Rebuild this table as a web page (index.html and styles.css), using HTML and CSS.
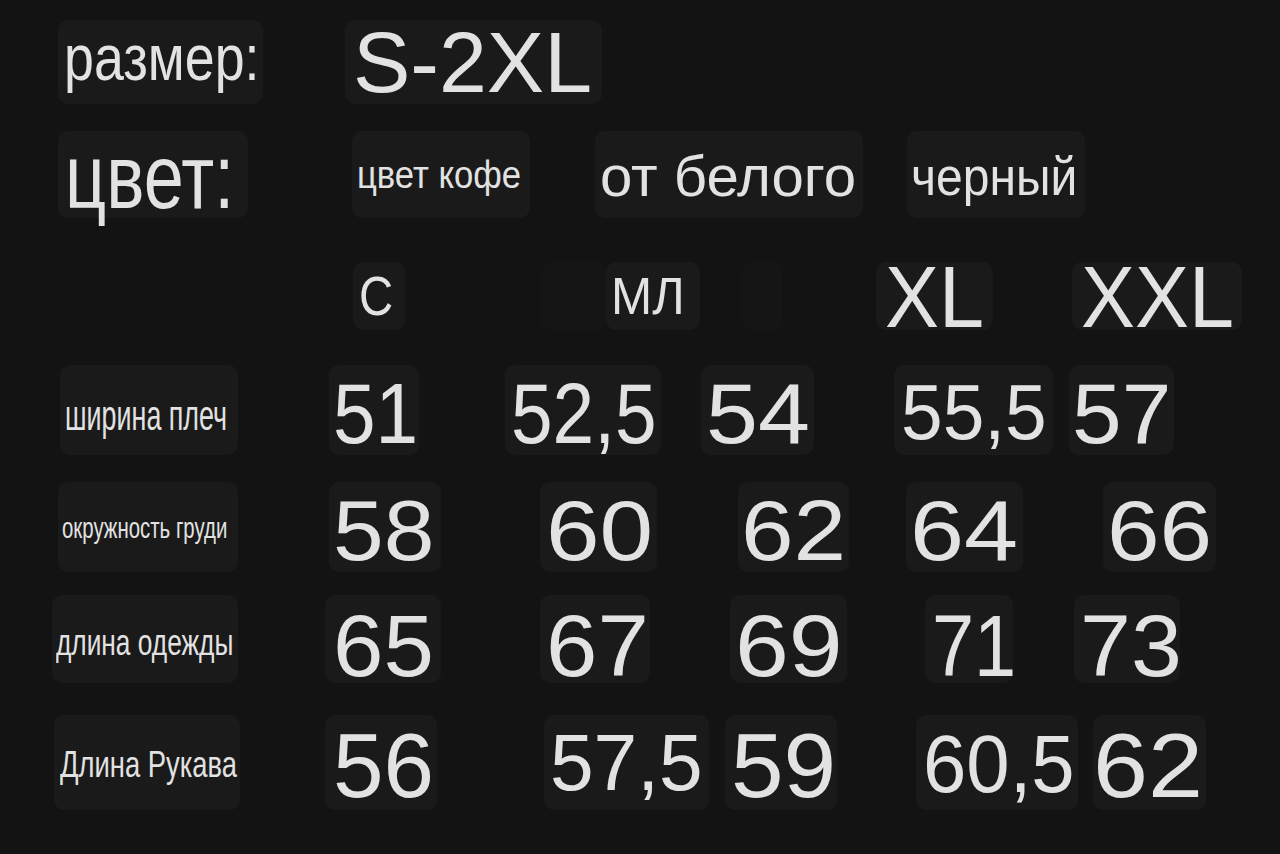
FILE: index.html
```html
<!DOCTYPE html>
<html lang="ru">
<head>
<meta charset="utf-8">
<title>Размерная сетка</title>
<link rel="stylesheet" href="styles.css">
</head>
<body>
<main class="sheet">
  <div class="row r1">
    <div class="chip c-razmer"><span class="t">размер:</span></div>
    <div class="chip c-range"><span class="t">S-2XL</span></div>
  </div>
  <div class="row r2">
    <div class="chip c-cvet"><span class="t">цвет:</span></div>
    <div class="chip c-kofe"><span class="t">цвет кофе</span></div>
    <div class="chip c-belogo"><span class="t">от белого</span></div>
    <div class="chip c-cherny"><span class="t">черный</span></div>
  </div>
  <div class="row r3">
    <div class="chip c-s"><span class="t">С</span></div>
    <div class="chip faint c-f1"></div>
    <div class="chip c-ml"><span class="t">МЛ</span></div>
    <div class="chip faint c-f2"></div>
    <div class="chip c-xl"><span class="t">XL</span></div>
    <div class="chip c-xxl"><span class="t">XXL</span></div>
  </div>
  <div class="row r4">
    <div class="chip lbl c-l4"><span class="t">ширина плеч</span></div>
    <div class="chip n c-51"><span class="t">51</span></div>
    <div class="chip n c-525"><span class="t">52,5</span></div>
    <div class="chip n c-54"><span class="t">54</span></div>
    <div class="chip n c-555"><span class="t">55,5</span></div>
    <div class="chip n c-57"><span class="t">57</span></div>
  </div>
  <div class="row r5">
    <div class="chip lbl c-l5"><span class="t">окружность груди</span></div>
    <div class="chip n c-58"><span class="t">58</span></div>
    <div class="chip n c-60"><span class="t">60</span></div>
    <div class="chip n c-62"><span class="t">62</span></div>
    <div class="chip n c-64"><span class="t">64</span></div>
    <div class="chip n c-66"><span class="t">66</span></div>
  </div>
  <div class="row r6">
    <div class="chip lbl c-l6"><span class="t">длина одежды</span></div>
    <div class="chip n c-65"><span class="t">65</span></div>
    <div class="chip n c-67"><span class="t">67</span></div>
    <div class="chip n c-69"><span class="t">69</span></div>
    <div class="chip n c-71"><span class="t">71</span></div>
    <div class="chip n c-73"><span class="t">73</span></div>
  </div>
  <div class="row r7">
    <div class="chip lbl c-l7"><span class="t">Длина Рукава</span></div>
    <div class="chip n c-56"><span class="t">56</span></div>
    <div class="chip n c-575"><span class="t">57,5</span></div>
    <div class="chip n c-59"><span class="t">59</span></div>
    <div class="chip n c-605"><span class="t">60,5</span></div>
    <div class="chip n c-62b"><span class="t">62</span></div>
  </div>
</main>
</body>
</html>
```

FILE: styles.css
```css
html, body {
  margin: 0;
  padding: 0;
  background: #131313;
}

.sheet {
  width: 1280px;
  height: 854px;
  overflow: hidden;
  padding-top: 20px;
  box-sizing: border-box;
  font-family: "Liberation Sans", Arial, sans-serif;
  color: #e2e2e2;
}

.row {
  display: flex;
  align-items: flex-start;
}

.r1 { height: 84px; }
.r2 { height: 87px; margin-top: 27px; }
.r3 { height: 68px; margin-top: 44px; }
.r4 { height: 90px; margin-top: 35px; }
.r5 { height: 90px; margin-top: 27px; }
.r6 { height: 88px; margin-top: 23px; }
.r7 { height: 95px; margin-top: 32px; }

.chip {
  --s: 1;
  flex: none;
  height: 100%;
  box-sizing: border-box;
  display: flex;
  align-items: center;
  background: #1a1a1a;
  border-radius: 10px;
  white-space: nowrap;
  overflow: visible;
}

.chip.faint {
  background: #151515;
}

.t {
  display: inline-block;
  line-height: 1;
  transform: scaleX(var(--s));
  transform-origin: 0 50%;
}

/* row 1 */
.c-razmer { margin-left: 58px; width: 205px; padding-left: 6px; padding-bottom: 8px; font-size: 64px; --s: 0.84; }
.c-range  { margin-left: 82px; width: 257px; padding-left: 8px; font-size: 86px; }

/* row 2 */
.c-cvet   { margin-left: 58px; width: 190px; padding-left: 7px; padding-top: 5px; font-size: 90px; --s: 0.8; }
.c-kofe   { margin-left: 104px; width: 178px; padding-left: 5px; padding-top: 2px; font-size: 38.5px; --s: 0.9; }
.c-belogo { margin-left: 65px; width: 268px; padding-left: 5px; padding-top: 3px; font-size: 57px; --s: 1.02; }
.c-cherny { margin-left: 44px; width: 178px; padding-left: 4px; padding-top: 3px; font-size: 54px; --s: 0.89; }

/* row 3 */
.c-s   { margin-left: 353px; width: 52px; padding-left: 6px; font-size: 55px; --s: 0.86; }
.c-f1  { margin-left: 136px; width: 65px; }
.c-ml  { margin-left: 0; width: 94px; padding-left: 5px; font-size: 52px; --s: 0.95; }
.c-f2  { margin-left: 41px; width: 41px; }
.c-xl  { margin-left: 94px; width: 117px; padding-left: 9px; font-size: 87px; --s: 0.93; }
.c-xxl { margin-left: 79px; width: 170px; padding-left: 9px; font-size: 87px; --s: 0.93; }

/* row 4 */
.c-l4  { margin-left: 60px; width: 178px; padding-left: 5px; padding-top: 12px; font-size: 42px; --s: 0.64; }
.c-51  { margin-left: 91px; width: 90px; padding-left: 4px; padding-top: 7px; font-size: 85px; --s: 0.9; }
.c-525 { margin-left: 86px; width: 156px; padding-left: 6px; padding-top: 7px; font-size: 85px; --s: 0.88; }
.c-54  { margin-left: 40px; width: 113px; padding-left: 5px; padding-top: 7px; font-size: 85px; --s: 1.1; }
.c-555 { margin-left: 80px; width: 159px; padding-left: 7px; padding-top: 3px; font-size: 78px; --s: 0.96; }
.c-57  { margin-left: 16px; width: 105px; padding-left: 3px; padding-top: 7px; font-size: 85px; --s: 1.05; }

/* row 5 */
.c-l5 { margin-left: 58px; width: 180px; padding-left: 4px; padding-top: 2px; font-size: 30px; --s: 0.68; }
.c-58 { margin-left: 91px; width: 112px; padding-left: 4px; padding-top: 6px; font-size: 86px; --s: 1.06; }
.c-60 { margin-left: 99px; width: 117px; padding-left: 6px; padding-top: 6px; font-size: 86px; --s: 1.12; }
.c-62 { margin-left: 81px; width: 111px; padding-left: 3px; padding-top: 6px; font-size: 86px; --s: 1.1; }
.c-64 { margin-left: 57px; width: 117px; padding-left: 4px; padding-top: 6px; font-size: 86px; --s: 1.13; }
.c-66 { margin-left: 80px; width: 113px; padding-left: 4px; padding-top: 6px; font-size: 86px; --s: 1.1; }

/* row 6 */
.c-l6 { margin-left: 52px; width: 186px; padding-left: 4px; padding-top: 8px; font-size: 36px; --s: 0.73; }
.c-65 { margin-left: 87px; width: 116px; padding-left: 8px; padding-top: 14px; font-size: 88px; --s: 1.03; }
.c-67 { margin-left: 99px; width: 110px; padding-left: 6px; padding-top: 14px; font-size: 88px; --s: 1.05; }
.c-69 { margin-left: 80px; width: 117px; padding-left: 5px; padding-top: 14px; font-size: 88px; --s: 1.1; }
.c-71 { margin-left: 78px; width: 88px; padding-left: 7px; padding-top: 14px; font-size: 88px; --s: 0.86; }
.c-73 { margin-left: 61px; width: 106px; padding-left: 6px; padding-top: 14px; font-size: 88px; --s: 1.04; }

/* row 7 */
.c-l7  { margin-left: 54px; width: 186px; padding-left: 6px; padding-top: 3px; font-size: 37px; --s: 0.74; }
.c-56  { margin-left: 85px; width: 112px; padding-left: 8px; padding-top: 6px; font-size: 90px; --s: 1.01; }
.c-575 { margin-left: 107px; width: 165px; padding-left: 6px; font-size: 80px; --s: 0.98; }
.c-59  { margin-left: 16px; width: 112px; padding-left: 6px; padding-top: 6px; font-size: 90px; --s: 1.05; }
.c-605 { margin-left: 79px; width: 162px; padding-left: 7px; padding-top: 2px; font-size: 82px; --s: 0.95; }
.c-62b { margin-left: 15px; width: 113px; padding-left: 0; padding-top: 6px; font-size: 90px; --s: 1.1; }
```
